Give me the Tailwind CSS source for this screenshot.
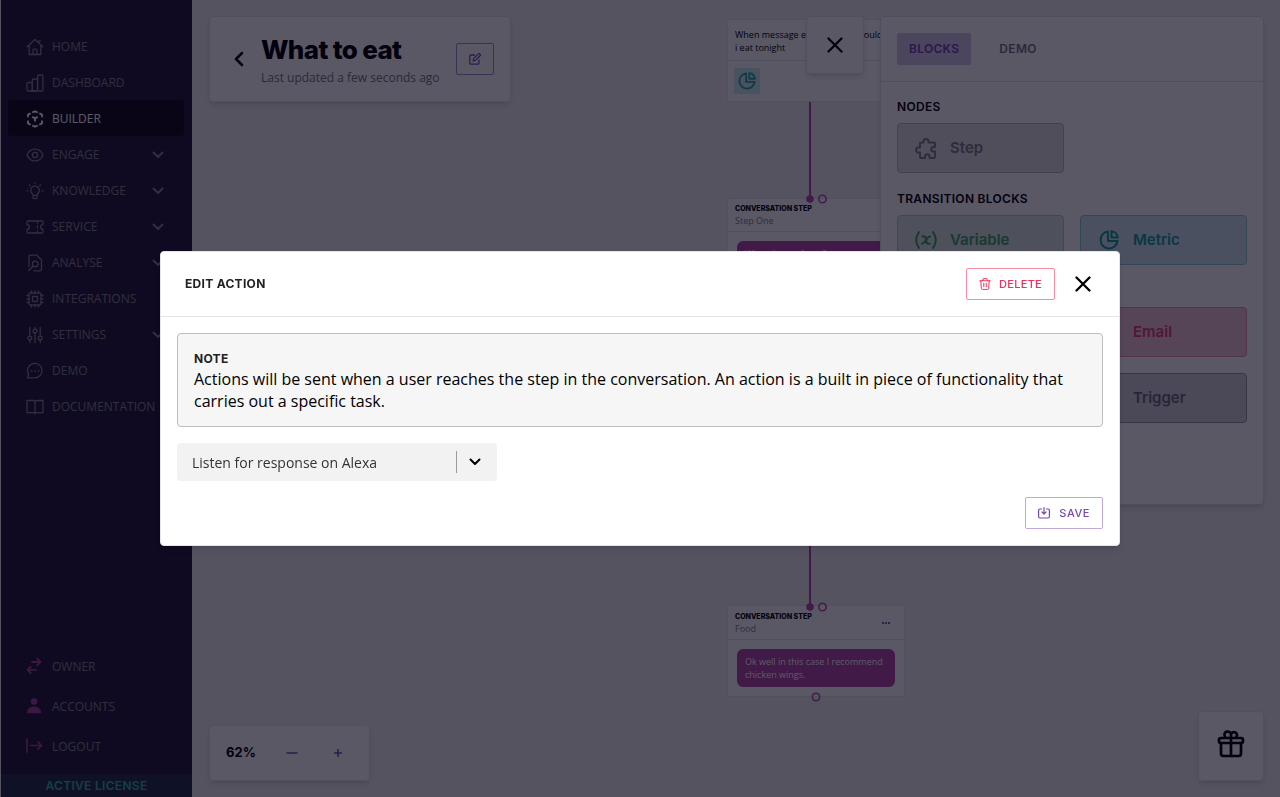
<!DOCTYPE html>
<html lang="en">
<head>
    <meta charset="UTF-8">
    <meta name="viewport" content="width=device-width, initial-scale=1.0">
    <title>Builder - What to eat</title>
    <script src="https://cdn.jsdelivr.net/npm/@tailwindcss/browser@4"></script>
</head>
<body class="h-screen overflow-hidden flex bg-[#f0f0ee] font-['Open_Sans','Noto_Sans',sans-serif] text-black">

    <!-- Icons used more than once -->
    <svg class="hidden">
        <symbol id="chevron" viewBox="0 0 12 8"><path d="M1.5 1.5 6 6l4.5-4.5" fill="none" stroke="currentColor" stroke-width="2" stroke-linecap="round" stroke-linejoin="round"/></symbol>
        <symbol id="cross" viewBox="0 0 16 16"><path d="M1.500 1.500l13 13M14.500 1.500l-13 13" fill="none" stroke="currentColor" stroke-width="2.300" stroke-linecap="round"/></symbol>
        <symbol id="pie" viewBox="0 0 20 20"><path d="M9 1.500A8.500 8.500 0 1 0 18.500 11H9zM12.500 1.200v6.300h6.300a7 7 0 0 0-6.300-6.300z" fill="none" stroke="currentColor" stroke-width="2" stroke-linejoin="round"/></symbol>
    </svg>

    <!-- Sidebar -->
    <aside class="w-48 shrink-0 flex flex-col justify-between bg-[#241d38] border-l border-[#f0f0ee] text-xs text-[#86838c]">
        <nav class="flex flex-col pt-7 pl-[7px] pr-2">
            <a href="#" class="h-9 px-[18px] pt-px flex items-center gap-2">
                <svg class="size-[18px]" viewBox="0 0 18 18" fill="none" stroke="currentColor" stroke-width="1.3" stroke-linecap="round" stroke-linejoin="round"><path d="M1.200 8.800 9 1.500l7.800 7.300M3.200 7v9.500h11.600V7M7 16.500v-4.300a1 1 0 0 1 1-1h2a1 1 0 0 1 1 1v4.300M12.800 5V2.800h1.500"/></svg>
                HOME
            </a>
            <a href="#" class="h-9 px-[18px] pt-px flex items-center gap-2">
                <svg class="size-[18px]" viewBox="0 0 18 18" fill="none" stroke="currentColor" stroke-width="1.3" stroke-linejoin="round"><rect x="1" y="8.500" width="5.300" height="8.500" rx="1.300"/><path d="M6.300 9V6.300A1.300 1.300 0 0 1 7.600 5h2.700a1.300 1.300 0 0 1 1.300 1.300M11.600 17H5"/><rect x="11.600" y="1" width="5.300" height="16" rx="1.300"/><path d="M6.300 9v7M11 17H6"/></svg>
                DASHBOARD
            </a>
            <a href="#" class="h-9 px-[18px] pt-px flex items-center gap-2 rounded bg-[#120d1d] text-white">
                <svg class="size-[18px]" viewBox="0 0 18 18" fill="none" stroke="currentColor" stroke-width="1.900" stroke-linecap="round" stroke-linejoin="round"><path d="M7 2.200 9 1.300l2 .9M4 3.600 2 4.600v2M14 3.600l2 1v2M2 11.200v2.200l2 1M16 11.200v2.200l-2 1M7 15.800l2 .9 2-.9M6.800 7.200 9 8.400l2.200-1.200M9 8.400v2.400"/></svg>
                BUILDER
            </a>
            <a href="#" class="h-9 px-5 pl-[18px] pt-px flex items-center gap-2">
                <svg class="size-[18px]" viewBox="0 0 18 18" fill="none" stroke="currentColor" stroke-width="1.3"><path d="M1 9c1.600-3.800 4.500-5.900 8-5.900S15.400 5.200 17 9c-1.600 3.800-4.500 5.900-8 5.900S2.600 12.800 1 9z"/><circle cx="9" cy="9" r="2.600"/></svg>
                <span class="flex-1">ENGAGE</span>
                <svg class="w-3 h-2"><use href="#chevron"/></svg>
            </a>
            <a href="#" class="h-9 px-5 pl-[18px] pt-px flex items-center gap-2">
                <svg class="size-[18px]" viewBox="0 0 18 18" fill="none" stroke="currentColor" stroke-width="1.3" stroke-linecap="round" stroke-linejoin="round"><path d="M7 13.300c0-1.500-2.300-2.300-2.300-4.800a4.300 4.300 0 0 1 8.600 0c0 2.500-2.300 3.300-2.300 4.800zM7 13.300v1.900a1.400 1.400 0 0 0 1.400 1.400h1.200a1.400 1.400 0 0 0 1.400-1.400v-1.900M9 1v.6M3.500 3l.7.7M14.500 3l-.7.7M.9 8.800h1M16.100 8.800h1"/></svg>
                <span class="flex-1">KNOWLEDGE</span>
                <svg class="w-3 h-2"><use href="#chevron"/></svg>
            </a>
            <a href="#" class="h-9 px-5 pl-[18px] pt-px flex items-center gap-2">
                <svg class="size-[18px]" viewBox="0 0 18 18" fill="none" stroke="currentColor" stroke-width="1.3" stroke-linecap="round" stroke-linejoin="round"><path d="M2.300 3h13.400a1.300 1.300 0 0 1 1.300 1.300v2.300a2.400 2.400 0 0 0 0 4.800v2.300a1.300 1.300 0 0 1-1.300 1.300H2.300A1.300 1.300 0 0 1 1 13.700v-2.300a2.400 2.400 0 0 0 0-4.800V4.300A1.300 1.300 0 0 1 2.300 3z"/><path d="M11.500 3v2M11.500 8v2M11.500 13v2"/></svg>
                <span class="flex-1">SERVICE</span>
                <svg class="w-3 h-2"><use href="#chevron"/></svg>
            </a>
            <a href="#" class="h-9 px-5 pl-[18px] pt-px flex items-center gap-2">
                <svg class="size-[18px]" viewBox="0 0 18 18" fill="none" stroke="currentColor" stroke-width="1.3" stroke-linecap="round" stroke-linejoin="round"><path d="M3 12.500V3a1.800 1.800 0 0 1 1.800-1.800h6L15.500 6v9a1.800 1.800 0 0 1-1.800 1.800H8"/><circle cx="9.200" cy="10" r="2.800"/><path d="m7.200 12-4.500 4.500"/></svg>
                <span class="flex-1">ANALYSE</span>
                <svg class="w-3 h-2"><use href="#chevron"/></svg>
            </a>
            <a href="#" class="h-9 px-[18px] pt-px flex items-center gap-2">
                <svg class="size-[18px]" viewBox="0 0 18 18" fill="none" stroke="currentColor" stroke-width="1.3" stroke-linecap="round"><rect x="3" y="3" width="12" height="12" rx="1.500"/><rect x="6.500" y="6.500" width="5" height="5" rx=".5"/><path d="M5.500 3V1M9 3V1M12.500 3V1M5.500 17v-2M9 17v-2M12.500 17v-2M3 5.500H1M3 9H1M3 12.500H1M17 5.500h-2M17 9h-2M17 12.500h-2"/></svg>
                INTEGRATIONS
            </a>
            <a href="#" class="h-9 px-5 pl-[18px] pt-px flex items-center gap-2">
                <svg class="size-[18px]" viewBox="0 0 18 18" fill="none" stroke="currentColor" stroke-width="1.3" stroke-linecap="round"><circle cx="3.800" cy="12" r="1.900"/><circle cx="9" cy="5" r="1.900"/><circle cx="14.200" cy="12" r="1.900"/><path d="M3.800 1.500v8.600M3.800 14v2.500M9 1.500v1.600M9 7v9.500M14.200 1.500v8.600M14.200 14v2.500"/></svg>
                <span class="flex-1">SETTINGS</span>
                <svg class="w-3 h-2"><use href="#chevron"/></svg>
            </a>
            <a href="#" class="h-9 px-[18px] pt-px flex items-center gap-2">
                <svg class="size-[18px]" viewBox="0 0 18 18" fill="none" stroke="currentColor" stroke-width="1.3" stroke-linecap="round" stroke-linejoin="round"><path d="M1.300 15.800h7.700A7.200 7.200 0 1 0 2.600 12.300z"/><path d="M5.800 9h.1M9.200 9h.1M12.600 9h.1" stroke-width="1.700"/></svg>
                DEMO
            </a>
            <a href="#" class="h-9 px-[18px] pt-px flex items-center gap-2">
                <svg class="size-[18px]" viewBox="0 0 18 18" fill="none" stroke="currentColor" stroke-width="1.3" stroke-linejoin="round"><path d="M9 4.500C9 3.300 8 2.500 6.800 2.500H1v12.200h6.200c1 0 1.800.5 1.800 1.300 0-.8.800-1.300 1.800-1.300H17V2.500h-5.800C10 2.500 9 3.300 9 4.500zM9 4.500V16"/></svg>
                DOCUMENTATION
            </a>
        </nav>

        <div class="flex flex-col">
            <a href="#" class="h-10 pl-6 flex items-center gap-[9px]">
                <svg class="size-[18px] text-[#a8409d]" viewBox="0 0 18 18" fill="none" stroke="currentColor" stroke-width="1.800" stroke-linecap="round" stroke-linejoin="round"><path d="M7 4h8.500M12.300.800l3.200 3.200-3.200 3.200M11 11.800H2.500M5.700 8.600l-3.200 3.200 3.200 3.200"/></svg>
                OWNER
            </a>
            <a href="#" class="h-10 pl-6 flex items-center gap-[9px]">
                <svg class="size-[18px] text-[#a8409d]" viewBox="0 0 18 18" fill="currentColor"><circle cx="9" cy="3.500" r="3.200"/><path d="M1.800 15.300C1.800 11 5 8.500 9 8.500s7.200 2.500 7.200 6.800z"/></svg>
                ACCOUNTS
            </a>
            <a href="#" class="h-10 pl-6 flex items-center gap-[9px]">
                <svg class="size-[18px] text-[#a8409d]" viewBox="0 0 18 18" fill="none" stroke="currentColor" stroke-width="1.700" stroke-linecap="round" stroke-linejoin="round"><path d="M2 1v13M5.500 7.500H16.500M13 4l3.500 3.500L13 11"/></svg>
                LOGOUT
            </a>
            <div class="mt-[7px] h-[23px] flex items-center justify-center bg-[#233246] font-['Inter',sans-serif] text-xs font-semibold tracking-wide text-[#2fb8a6]">ACTIVE LICENSE</div>
        </div>
    </aside>

    <!-- Canvas -->
    <main class="relative flex-1">
        <svg class="absolute left-0 top-0 w-full h-full text-[#b94aad]" stroke="currentColor" stroke-width="2"><path d="M618 100v98M618 440v166"/></svg>

        <section class="absolute left-[535px] top-[19px] w-[178px] bg-white border border-[#e6e6e9] rounded-xs">
            <p class="h-[41px] pl-[7px] pr-5 pt-2 border-b border-[#e6e6e9] text-[9px] leading-[13px]">When message equals what should i eat tonight</p>
            <div class="h-10 px-[6px] flex items-center">
                <span class="size-[26px] flex items-center justify-center rounded-xs bg-[#cdeeee] text-[#1fa9a4]"><svg class="size-[18px]"><use href="#pie"/></svg></span>
            </div>
        </section>

        <section class="absolute left-[535px] top-[198px] w-[178px] bg-white border border-[#e6e6e9] rounded-xs">
            <header class="h-[33px] px-[7px] pt-1 border-b border-[#e6e6e9]">
                <h4 class="font-['Inter',sans-serif] text-[7px] leading-[11px] font-extrabold">CONVERSATION STEP</h4>
                <p class="text-[9px] leading-[13px] text-[#85828c]">Step One</p>
            </header>
            <p class="m-[9px] px-2 py-[6px] rounded-md bg-[#b949aa] text-[9px] leading-[13px] text-white">What do you fancy?</p>
        </section>

        <section class="absolute left-[535px] top-[605px] w-[178px] bg-white border border-[#e6e6e9] rounded-xs">
            <header class="h-[34px] px-[7px] flex items-center justify-between border-b border-[#e6e6e9]">
                <div>
                    <h4 class="font-['Inter',sans-serif] text-[7px] leading-[11px] font-extrabold">CONVERSATION STEP</h4>
                    <p class="text-[9px] leading-[13px] text-[#85828c]">Food</p>
                </div>
                <button class="mr-1.5" aria-label="Step menu"><svg class="w-[10px] h-1 text-[#3f3680]" viewBox="0 0 10 4" fill="currentColor"><circle cx="2" cy="2" r="1"/><circle cx="5" cy="2" r="1"/><circle cx="8" cy="2" r="1"/></svg></button>
            </header>
            <p class="m-[9px] px-2 py-[6px] rounded-md bg-[#b949aa] text-[9px] leading-[13px] text-white">Ok well in this case I recommend chicken wings.</p>
        </section>

        <!-- Connection points -->
        <svg class="absolute left-0 top-0 w-full h-full pointer-events-none text-[#b94aad]" fill="none" stroke="currentColor" stroke-width="1.500">
            <circle cx="618" cy="199" r="3" fill="currentColor"/><circle cx="630.500" cy="199" r="3.700"/>
            <circle cx="618" cy="607" r="3" fill="currentColor"/><circle cx="630.500" cy="607" r="3.700"/>
            <circle cx="624" cy="697" r="3.700"/>
        </svg>

        <!-- Tools that float above the canvas -->
        <div class="absolute inset-0 p-4 pl-[17px] flex justify-between">
            <div class="flex flex-col justify-between items-start">
                <header class="h-[86px] w-[302px] pl-6 pr-4 flex items-center bg-white border border-[#e6e6e8] rounded shadow-md">
                    <button aria-label="Back"><svg class="w-[10px] h-4" viewBox="0 0 10 16" fill="none" stroke="currentColor" stroke-width="2.500" stroke-linecap="round" stroke-linejoin="round"><path d="M8 2 2 8l6 6"/></svg></button>
                    <div class="ml-[17px] pt-1.5 flex-1 whitespace-nowrap">
                        <h1 class="font-['Inter',sans-serif] text-[26px] leading-8 font-extrabold tracking-tight">What to eat</h1>
                        <p class="text-xs leading-6 text-[#77747e]">Last updated a few seconds ago</p>
                    </div>
                    <button class="h-8 w-[38px] flex items-center justify-center border border-[#a68fd0] rounded-xs text-[#7a50b8]" aria-label="Rename">
                        <svg class="size-3" viewBox="0 0 12 12" fill="none" stroke="currentColor" stroke-width="1.300" stroke-linecap="round" stroke-linejoin="round"><path d="M5.500 2H2A1.200 1.200 0 0 0 .8 3.200V10A1.200 1.200 0 0 0 2 11.200h6.800A1.200 1.200 0 0 0 10 10V7M4.200 7.800l.4-2.200L9.300.9a1 1 0 0 1 1.500 0l.3.3a1 1 0 0 1 0 1.500L6.400 7.400z"/></svg>
                    </button>
                </header>
                <div class="h-14 w-[161px] pl-4 flex items-center bg-white border border-[#e6e6e8] rounded shadow-md">
                    <span class="w-[43px] font-['Inter',sans-serif] text-[13px] font-bold">62%</span>
                    <button class="w-[46px] flex justify-center text-[#7a50b8]" aria-label="Zoom out"><svg class="w-3 h-3" viewBox="0 0 12 12"><path d="M.5 6h11" stroke="currentColor" stroke-width="1.500"/></svg></button>
                    <button class="w-[46px] flex justify-center text-[#7a50b8]" aria-label="Zoom in"><svg class="w-3 h-3" viewBox="0 0 12 12"><path d="M2 6h8M6 2v8" stroke="currentColor" stroke-width="1.500"/></svg></button>
                </div>
            </div>

            <div class="flex gap-4">
                <button class="size-[58px] flex items-center justify-center bg-white border border-[#e6e6e8] rounded shadow-md" aria-label="Close blocks"><svg class="size-4"><use href="#cross"/></svg></button>
                <div class="flex flex-col justify-between items-end">
                    <section class="w-96 bg-white border border-[#e0e0e3] rounded shadow-md font-['Inter',sans-serif]">
                        <div class="h-[65px] px-4 flex items-center gap-4 border-b border-[#dedee2] text-xs font-semibold tracking-wide">
                            <button class="h-8 px-3 rounded-xs bg-[#d3c6e8] text-[#7244bb]">BLOCKS</button>
                            <button class="h-8 px-3 text-[#77747e]">DEMO</button>
                        </div>
                        <div class="px-4 pt-[15px] pb-[81px] flex flex-col gap-4 text-[15px] font-semibold">
                            <div>
                                <h2 class="mb-1.5 text-xs leading-5 font-semibold tracking-wide">NODES</h2>
                                <div class="grid grid-cols-2 gap-4">
                                    <button class="h-[50px] px-4 flex items-center gap-3 border border-[#bcbac0] rounded-sm bg-[#e1e1e1] text-[#807d87]">
                                        <svg class="size-6" viewBox="0 0 24 24" fill="none" stroke="currentColor" stroke-width="1.900" stroke-linejoin="round"><path d="M9.500 5.500a2.500 2.500 0 0 1 5 0V6.500h5.500a1 1 0 0 1 1 1V11h-1.500a2.200 2.200 0 0 0 0 4.500H21V21a1 1 0 0 1-1 1h-4.500v-1.500a2.200 2.200 0 0 0-4.400 0V22H7a1 1 0 0 1-1-1v-4.500H4.500a2.500 2.500 0 0 1 0-5H6v-4a1 1 0 0 1 1-1h2.500z"/></svg>
                                        Step
                                    </button>
                                </div>
                            </div>
                            <div>
                                <h2 class="mb-1.5 text-xs leading-5 font-semibold tracking-wide">TRANSITION BLOCKS</h2>
                                <div class="grid grid-cols-2 gap-4">
                                    <button class="h-[50px] px-4 flex items-center gap-3 border border-[#a3d6c4] rounded-sm bg-[#dceae2] text-[#43a560]">
                                        <svg class="size-6" viewBox="0 0 24 24" fill="none" stroke="currentColor" stroke-width="2.100" stroke-linecap="round"><path d="M5 4C1.500 9 1.500 15 5 20M19 4c3.500 5 3.500 11 0 16M8.500 8.500c2.500-1 3 .5 3.500 3.500s1.500 4.500 3.800 3.500M16 8.500c-3.200-.5-4.500 7.500-8 7"/></svg>
                                        Variable
                                    </button>
                                    <button class="h-[50px] px-4 flex items-center gap-3 border border-[#7fd0d2] rounded-sm bg-[#d0e8ec] text-[#129fa3]">
                                        <svg class="size-6 p-0.5"><use href="#pie"/></svg>
                                        Metric
                                    </button>
                                </div>
                            </div>
                            <div>
                                <h2 class="mb-1.5 text-xs leading-5 font-semibold tracking-wide">ACTION BLOCKS</h2>
                                <div class="grid grid-cols-2 gap-4">
                                    <button class="col-start-2 h-[50px] px-4 flex items-center gap-3 border border-[#f08fac] rounded-sm bg-[#f2c6d5] text-[#e8406f]"><span class="size-6"></span>Email</button>
                                    <button class="col-start-2 h-[50px] px-4 flex items-center gap-3 border border-[#9b99a3] rounded-sm bg-[#d3d2d6] text-[#6d6b78]"><span class="size-6"></span>Trigger</button>
                                </div>
                            </div>
                        </div>
                    </section>
                    <button class="h-[70px] w-[66px] pb-1 flex items-center justify-center bg-white border border-[#e6e6e8] rounded shadow-md" aria-label="What is new">
                        <svg class="size-[30px]" viewBox="0 0 30 30" fill="none" stroke="currentColor" stroke-width="2.700" stroke-linejoin="round"><rect x="3" y="9" width="24" height="5" rx="2"/><path d="M5 14v10.500a2.500 2.500 0 0 0 2.500 2.500h15a2.500 2.500 0 0 0 2.500-2.500V14M15 9v18M15 9V5.800a3.300 3.300 0 1 0-6 1.900L9.500 9M15 9V6a3 3 0 1 1 5.500 1.700L19.500 9"/></svg>
                    </button>
                </div>
            </div>
        </div>
    </main>

    <!-- Edit action dialog -->
    <div class="fixed inset-0 flex items-center justify-center bg-[#040216]/66">
        <div role="dialog" aria-labelledby="dialog-title" class="w-3/4 bg-white border border-[#e6e6e8] rounded shadow-md">
            <header class="h-[65px] pl-6 pr-[28px] flex items-center border-b border-[#e4e4e4]">
                <h2 id="dialog-title" class="flex-1 font-['Inter',sans-serif] text-xs font-bold tracking-wide text-[#222]">EDIT ACTION</h2>
                <button class="h-8 px-3 flex items-center gap-2 border border-[#f98ca3] rounded-xs font-['Inter',sans-serif] text-[11px] font-medium tracking-wide text-[#ef2f5c]">
                    <svg class="size-3" viewBox="0 0 12 12" fill="none" stroke="currentColor" stroke-linecap="round" stroke-linejoin="round"><path d="M.8 2.800h10.400M3.500 2.700 4.200.7h3.600l.7 2M1.800 2.800l.5 7.500a1.200 1.200 0 0 0 1.200 1.100h5a1.200 1.200 0 0 0 1.200-1.100l.5-7.500M4.800 5.300v3.500M7.200 5.300v3.500"/></svg>
                    DELETE
                </button>
                <button class="ml-5" aria-label="Close"><svg class="size-4"><use href="#cross"/></svg></button>
            </header>
            <div class="p-4 flex flex-col gap-4">
                <div class="px-4 pt-4 pb-3.5 border border-[#bdbdbd] rounded-sm bg-[#f6f6f6]">
                    <h3 class="font-['Inter',sans-serif] text-xs leading-[18px] font-bold tracking-wide text-[#222]">NOTE</h3>
                    <p class="text-base leading-[22px]">Actions will be sent when a user reaches the step in the conversation. An action is a built in piece of functionality that carries out a specific task.</p>
                </div>
                <div class="relative w-80">
                    <select aria-label="Action" class="appearance-none block w-full h-[38px] pt-0.5 px-[15px] rounded-sm bg-[#f2f2f2] text-sm text-[#333]">
                        <option>Listen for response on Alexa</option>
                    </select>
                    <div class="absolute inset-y-2 right-4 flex items-center gap-3 pointer-events-none">
                        <span class="w-px h-full bg-[#9a9a9a]"></span>
                        <svg class="w-3 h-2"><use href="#chevron"/></svg>
                    </div>
                </div>
                <button class="self-end h-8 px-3 flex items-center gap-[9px] border border-[#bfa9dc] rounded-xs font-['Inter',sans-serif] text-[11px] font-medium tracking-wider text-[#7549ae]">
                    <svg class="size-3" viewBox="0 0 12 12" fill="none" stroke="currentColor" stroke-width="1.200" stroke-linecap="round" stroke-linejoin="round"><path d="M3.500 2H1.800a1.200 1.200 0 0 0-1.200 1.200v6.600A1.200 1.200 0 0 0 1.800 11h8.400a1.200 1.200 0 0 0 1.200-1.200V3.200A1.200 1.200 0 0 0 10.200 2H8.500M6 .6v6.200M4 5l2 2 2-2"/></svg>
                    SAVE
                </button>
            </div>
        </div>
    </div>
</body>
</html>
